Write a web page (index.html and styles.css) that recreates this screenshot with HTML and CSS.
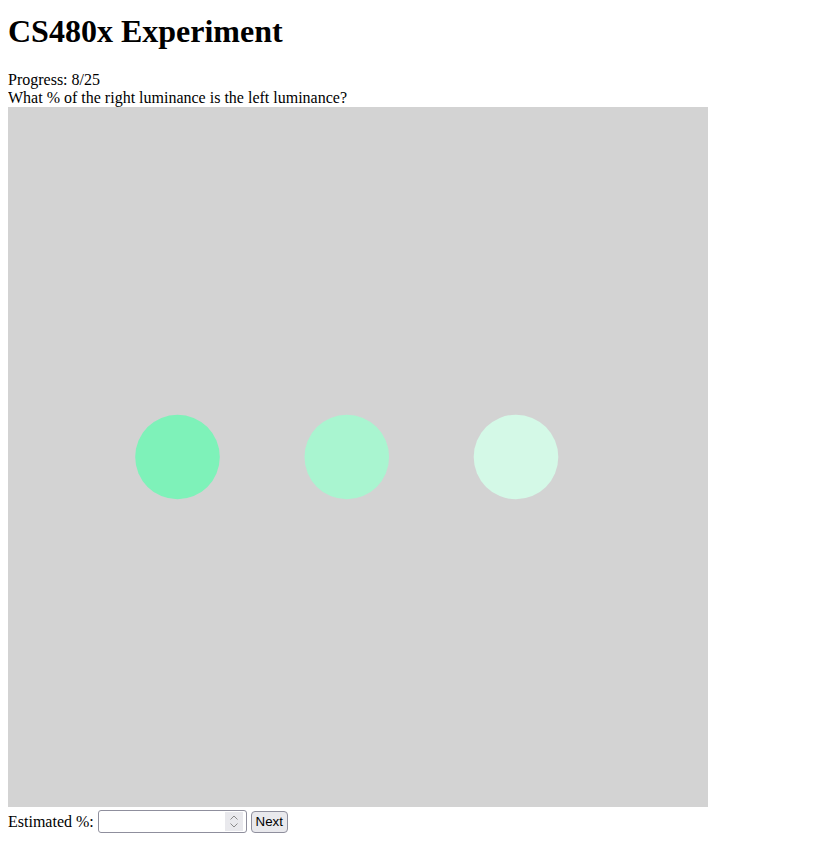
FILE: index.html
```html
<!DOCTYPE html>
<html>
<head>
<meta charset="utf-8">
<title>CS480x Experiment</title>
<link rel="stylesheet" href="styles.css">
</head>
<body>
<h1 class="title">CS480x Experiment</h1>
<div class="progress">Progress: 8/25</div>
<div class="question">What % of the right luminance is the left luminance?</div>
<svg class="stage" width="700" height="700" viewBox="0 0 700 700">
  <rect width="700" height="700" fill="#d3d3d3"/>
  <circle cx="169.5" cy="350" r="42.3" fill="#7ef2b9"/>
  <circle cx="338.8" cy="350" r="42.3" fill="#a9f5d0"/>
  <circle cx="508" cy="350" r="42.3" fill="#d4f9e7"/>
</svg>
<form class="answer">
  <label class="answer-label" for="est">Estimated %:</label>
  <span class="field">
    <input class="answer-input" id="est" type="number">
    <span class="spinner" aria-hidden="true">
      <svg width="18" height="19" viewBox="0 0 18 19">
        <path d="M5.5 7.5 L9 4 L12.5 7.5" fill="none" stroke="#8a8a8a" stroke-width="1"/>
        <path d="M5.5 11.5 L9 15 L12.5 11.5" fill="none" stroke="#8a8a8a" stroke-width="1"/>
      </svg>
    </span>
  </span>
  <button class="answer-btn" type="button">Next</button>
</form>
</body>
</html>
```
FILE: styles.css
```css
body {
  margin: 8px;
  font-family: "Liberation Serif", "Times New Roman", serif;
  font-size: 16px;
  color: #000;
  background: #fff;
}
.title {
  font-size: 32px;
  font-weight: bold;
  margin: 5px 0 21.44px;
}
.stage {
  display: block;
}
.answer {
  margin: 0;
  padding-top: 3px;
  display: flex;
  align-items: center;
  gap: 4px;
}
.field {
  display: inline-flex;
  align-items: center;
  box-sizing: border-box;
  width: 149px;
  height: 23px;
  border: 1px solid #8f8f9d;
  border-radius: 3px;
  padding: 1px 3px 1px 2px;
  background: #fff;
}
.answer-input {
  flex: 1;
  min-width: 0;
  border: none;
  outline: none;
  padding: 0;
  height: 19px;
  font-family: "Liberation Sans", Arial, sans-serif;
  font-size: 13.33px;
  background: transparent;
  -moz-appearance: textfield;
  appearance: textfield;
}
.answer-input::-webkit-inner-spin-button,
.answer-input::-webkit-outer-spin-button {
  -webkit-appearance: none;
  margin: 0;
}
.spinner {
  display: block;
  width: 18px;
  height: 19px;
  background: #e9e9ed;
}
.spinner svg {
  display: block;
}
.answer-btn {
  box-sizing: border-box;
  width: 37px;
  height: 22px;
  padding: 0;
  margin-left: 0;
  border: 1px solid #8f8f9d;
  border-radius: 4px;
  background: #e9e9ed;
  color: #000;
  font-family: "Liberation Sans", Arial, sans-serif;
  font-size: 13.33px;
}
```
